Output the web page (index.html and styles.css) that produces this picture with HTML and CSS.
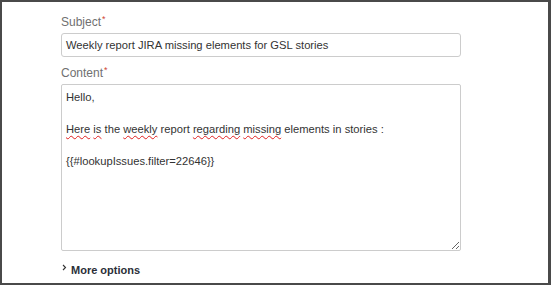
FILE: index.html
```html
<!DOCTYPE html>
<html>
<head>
<meta charset="utf-8">
<link rel="stylesheet" href="styles.css">
</head>
<body>
<div class="frame">
  <div class="form">
    <label class="label">Subject<span class="req">*</span></label>
    <div class="input">Weekly report JIRA missing elements for GSL stories</div>
    <label class="label label-content">Content<span class="req">*</span></label>
    <div class="textarea">
      <div>Hello,</div>
      <div>&nbsp;</div>
      <div><span class="sp">Here</span> <span class="sp">is</span> the <span class="sp">weekly</span> report <span class="sp">regarding</span> <span class="sp">missing</span> elements in stories :</div>
      <div>&nbsp;</div>
      <div>{{#lookupIssues.filter=22646}}</div>
    </div>
    <div class="more">
      <svg class="chev" width="5" height="7" viewBox="0 0 5 7"><path d="M1 1 L3.5 3.5 L1 6" fill="none" stroke="#333" stroke-width="1.1"/></svg>
      <span>More options</span>
    </div>
  </div>
</div>
</body>
</html>
```
FILE: styles.css
```css
html, body {
  margin: 0;
  padding: 0;
  background: #fff;
}
.frame {
  width: 551px;
  height: 285px;
  box-sizing: border-box;
  border-style: solid;
  border-color: #4a4a4a;
  border-width: 2px 3px 2px 2px;
  overflow: hidden;
  font-family: "Liberation Sans", Arial, sans-serif;
  font-size: 11.2px;
  line-height: 16px;
  color: #333;
}
.form {
  display: flex;
  flex-direction: column;
  padding: 12px 0 0 59px;
  width: 400px;
}
.label {
  display: block;
  color: #707070;
  font-size: 12px;
  height: 16px;
  margin-bottom: 3px;
}
.label-content {
  margin-top: 8px;
}
.req {
  color: #d04437;
  font-size: 9px;
  vertical-align: top;
  position: relative;
  top: -3px;
  margin-left: 1px;
}
.input {
  box-sizing: border-box;
  height: 24px;
  border: 1px solid #ccc;
  border-radius: 3px;
  padding: 0 4px;
  line-height: 22px;
  color: #333;
  white-space: nowrap;
}
.textarea {
  box-sizing: border-box;
  height: 167px;
  border: 1px solid #ccc;
  border-radius: 2px;
  padding: 4px 4px;
  color: #333;
  overflow: auto;
  resize: both;
}
.sp {
  text-decoration: underline wavy #e02020;
  text-decoration-thickness: 1px;
  text-underline-offset: 2px;
}
.more {
  display: flex;
  align-items: center;
  margin-top: 12px;
  font-size: 11px;
  font-weight: bold;
  color: #2b2f38;
  line-height: 14px;
}
.chev {
  margin: -6px 4px 0 1px;
}
```
